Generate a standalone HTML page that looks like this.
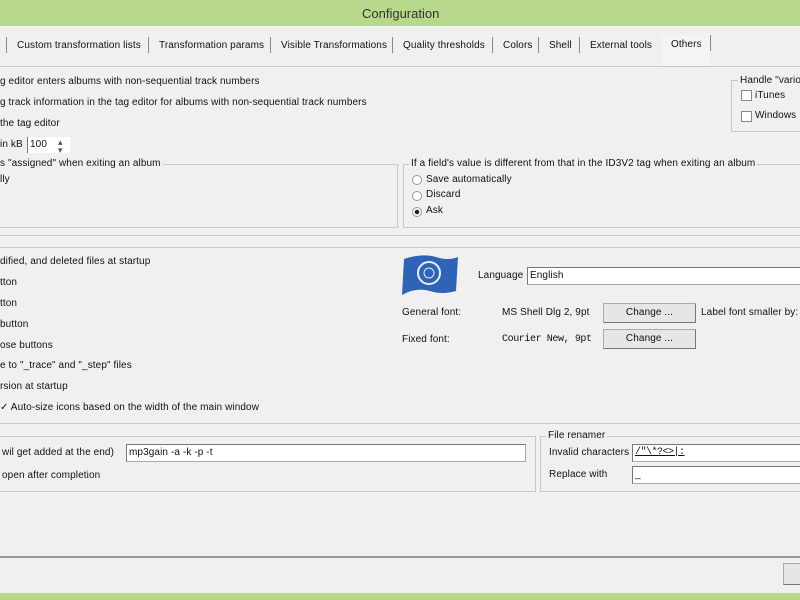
<!DOCTYPE html><html><head><style>
body{margin:0;width:800px;height:600px;overflow:hidden;background:#f0f0f0;font-family:"Liberation Sans",sans-serif;font-size:10px;letter-spacing:0.1px;color:#111;position:relative}
.a{position:absolute;white-space:nowrap}
.box{position:absolute;border:1px solid #c8c8c8}
.hl{position:absolute;left:0;width:800px;height:1px;background:#c8c8c8}
.in{position:absolute;background:#fff;border:1px solid #aaa;border-top-color:#777;border-left-color:#777;height:16px;line-height:16px;padding-left:2px}
.btn{position:absolute;background:#e6e6e6;border:1px solid #aaa;border-right-color:#777;border-bottom-color:#777;text-align:center;line-height:18px}
.cb{position:absolute;width:9px;height:9px;border:1px solid #888;background:#fff}
.rb{position:absolute;width:8px;height:8px;border:1px solid #999;border-radius:50%;background:#fff}
.sep{position:absolute;top:37px;width:1px;height:16px;background:#888}
</style></head><body>
<div class="a" style="left:0;top:0;width:800px;height:26px;background:#b8d98c"></div>
<div class="a" style="left:362px;top:6px;font-size:13px;color:#333;letter-spacing:0">Configuration</div>
<div class="a" style="left:0;top:593px;width:800px;height:7px;background:#b8d98c"></div>
<div class="sep" style="left:6px"></div><div class="a" style="left:17px;top:40px">Custom transformation lists</div>
<div class="sep" style="left:148px"></div><div class="a" style="left:159px;top:40px">Transformation params</div>
<div class="sep" style="left:270px"></div><div class="a" style="left:281px;top:40px">Visible Transformations</div>
<div class="sep" style="left:392px"></div><div class="a" style="left:403px;top:40px">Quality thresholds</div>
<div class="sep" style="left:492px"></div><div class="a" style="left:503px;top:40px">Colors</div>
<div class="sep" style="left:538px"></div><div class="a" style="left:549px;top:40px">Shell</div>
<div class="sep" style="left:579px"></div><div class="a" style="left:590px;top:40px">External tools</div>
<div class="a" style="left:662px;top:34px;width:48px;height:32px;background:#f4f4f4"></div>
<div class="a" style="left:671px;top:39px">Others</div>
<div class="sep" style="left:710px;top:35px"></div>
<div class="hl" style="top:66px"></div>
<div class="a" style="left:0;top:76px">g editor enters albums with non-sequential track numbers</div>
<div class="a" style="left:0;top:97px">g track information in the tag editor for albums with non-sequential track numbers</div>
<div class="a" style="left:0;top:118px">the tag editor</div>
<div class="a" style="left:0;top:139px">in kB</div>
<div class="in" style="left:27px;top:137px;width:40px;border:none;border-left:1px solid #777">100</div>
<div class="a" style="left:58px;top:138px;font-size:9px;line-height:8px;color:#555">▴<br>▾</div>
<div class="box" style="left:-2px;top:164px;width:398px;height:62px"></div>
<div class="a" style="left:0;top:158px;background:#f0f0f0;padding-right:2px">s "assigned" when exiting an album</div>
<div class="a" style="left:0;top:174px">lly</div>
<div class="box" style="left:403px;top:164px;width:400px;height:62px"></div>
<div class="a" style="left:409px;top:158px;background:#f0f0f0;padding:0 2px">If a field's value is different from that in the ID3V2 tag when exiting an album</div>
<div class="rb" style="left:412px;top:175px"></div><div class="a" style="left:426px;top:174px">Save automatically</div>
<div class="rb" style="left:412px;top:191px"></div><div class="a" style="left:426px;top:189px">Discard</div>
<div class="rb" style="left:412px;top:207px;background:radial-gradient(#222 2px,#fff 2.5px)"></div><div class="a" style="left:426px;top:205px">Ask</div>
<div class="box" style="left:731px;top:80px;width:80px;height:50px"></div>
<div class="a" style="left:738px;top:75px;background:#f0f0f0;padding:0 2px">Handle "various</div>
<div class="cb" style="left:741px;top:90px"></div><div class="a" style="left:755px;top:90px">iTunes</div>
<div class="cb" style="left:741px;top:111px"></div><div class="a" style="left:755px;top:110px">Windows</div>
<div class="hl" style="top:235px"></div><div class="hl" style="top:247px"></div>
<div class="a" style="left:0;top:256px">dified, and deleted files at startup</div>
<div class="a" style="left:0;top:277px">tton</div>
<div class="a" style="left:0;top:298px">tton</div>
<div class="a" style="left:0;top:319px">button</div>
<div class="a" style="left:0;top:340px">ose buttons</div>
<div class="a" style="left:0;top:360px">e to "_trace" and "_step" files</div>
<div class="a" style="left:0;top:381px">rsion at startup</div>
<div class="a" style="left:0;top:402px">✓ Auto-size icons based on the width of the main window</div>
<svg class="a" style="left:402px;top:253px" width="56" height="44"><path d="M2 6 Q20 0 34 4 Q46 8 56 4 L54 38 Q40 42 28 38 Q14 34 0 42Z" fill="#2f63b5"/><circle cx="27" cy="20" r="11" fill="none" stroke="#e8eef8" stroke-width="2"/><circle cx="27" cy="20" r="5" fill="none" stroke="#e8eef8"/></svg>
<div class="a" style="left:478px;top:270px">Language</div>
<div class="in" style="left:527px;top:267px;width:280px">English</div>
<div class="a" style="left:402px;top:307px">General font:</div>
<div class="a" style="left:502px;top:307px">MS Shell Dlg 2, 9pt</div>
<div class="btn" style="left:603px;top:303px;width:91px">Change ...</div>
<div class="a" style="left:701px;top:307px">Label font smaller by:</div>
<div class="a" style="left:402px;top:334px">Fixed font:</div>
<div class="a" style="left:502px;top:334px;font-family:'Liberation Mono',monospace;font-size:10px;letter-spacing:-0.4px">Courier New, 9pt</div>
<div class="btn" style="left:603px;top:329px;width:91px">Change ...</div>
<div class="hl" style="top:423px"></div>
<div class="box" style="left:-2px;top:436px;width:536px;height:54px"></div>
<div class="a" style="left:2px;top:447px">wil get added at the end)</div>
<div class="in" style="left:126px;top:444px;width:396px">mp3gain -a -k -p -t</div>
<div class="a" style="left:2px;top:470px">open after completion</div>
<div class="box" style="left:540px;top:436px;width:270px;height:54px"></div>
<div class="a" style="left:546px;top:430px;background:#f0f0f0;padding:0 2px">File renamer</div>
<div class="a" style="left:549px;top:447px">Invalid characters</div>
<div class="in" style="left:632px;top:444px;width:170px;font-family:'Liberation Mono',monospace;font-size:10px;letter-spacing:-0.5px;text-decoration:underline">/"\*?&lt;&gt;|:</div>
<div class="a" style="left:549px;top:469px">Replace with</div>
<div class="in" style="left:632px;top:466px;width:170px">_</div>
<div class="hl" style="top:556px;background:#999;height:2px"></div>
<div class="btn" style="left:783px;top:563px;width:30px;height:20px"></div>
</body></html>
